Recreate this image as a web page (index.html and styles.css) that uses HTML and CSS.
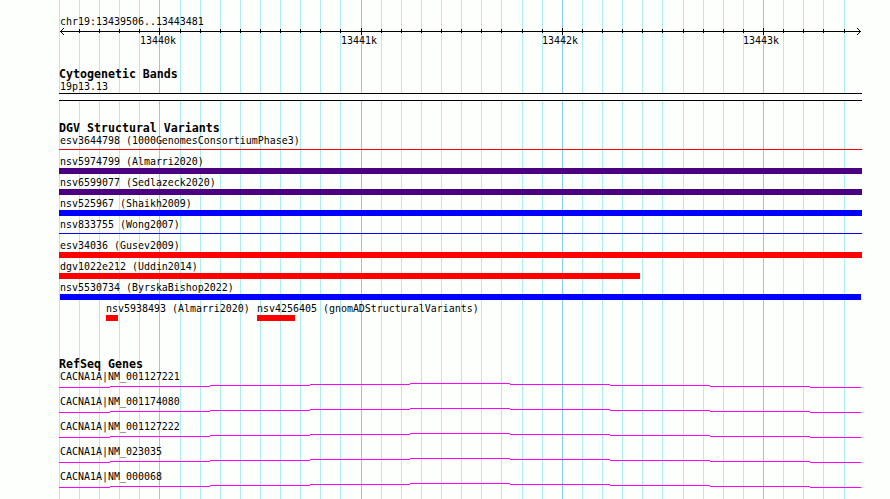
FILE: index.html
```html
<!DOCTYPE html>
<html lang="en">
<head>
  <meta charset="UTF-8">
  <title>chr19:13439506..13443481</title>
  <link rel="stylesheet" href="styles.css">
</head>
<body>
  <div class="browser">
    <svg class="grid" width="890" height="499" shape-rendering="crispEdges">
      <path class="minor" d="M59.5 0v499M79.5 0v499M99.5 0v499M119.5 0v499M139.5 0v499M180.5 0v499M200.5 0v499M220.5 0v499M240.5 0v499M260.5 0v499M280.5 0v499M300.5 0v499M320.5 0v499M340.5 0v499M381.5 0v499M401.5 0v499M421.5 0v499M441.5 0v499M461.5 0v499M481.5 0v499M501.5 0v499M522.5 0v499M542.5 0v499M582.5 0v499M602.5 0v499M622.5 0v499M642.5 0v499M662.5 0v499M683.5 0v499M703.5 0v499M723.5 0v499M743.5 0v499M783.5 0v499M803.5 0v499M823.5 0v499M844.5 0v499"/>
      <path class="major" d="M159.5 0v499M361.5 0v499M562.5 0v499M763.5 0v499"/>
    </svg>

    <div class="tracks">
      <section class="scale">
        <div class="label">chr19:13439506..13443481</div>
        <svg class="axis" width="803" height="9" shape-rendering="crispEdges">
          <path d="M1 4.5h801"/>
          <path d="M20.5 2v4M40.5 2v4M60.5 2v4M80.5 2v4M121.5 2v4M141.5 2v4M161.5 2v4M181.5 2v4M201.5 2v4M221.5 2v4M241.5 2v4M261.5 2v4M281.5 2v4M322.5 2v4M342.5 2v4M362.5 2v4M382.5 2v4M402.5 2v4M422.5 2v4M442.5 2v4M463.5 2v4M483.5 2v4M523.5 2v4M543.5 2v4M563.5 2v4M583.5 2v4M603.5 2v4M624.5 2v4M644.5 2v4M664.5 2v4M684.5 2v4M724.5 2v4M744.5 2v4M764.5 2v4M785.5 2v4"/>
          <path d="M100.5 1v7M302.5 1v7M503.5 1v7M704.5 1v7"/>
          <!-- arrow heads -->
          <path d="M2 3.5h1M3 2.5h1M4 1.5h1M2 5.5h1M3 6.5h1M4 7.5h1"/>
          <path d="M800 3.5h1M799 2.5h1M798 1.5h1M800 5.5h1M799 6.5h1M798 7.5h1"/>
        </svg>
        <div class="ticks">
          <span>13440k</span>
          <span>13441k</span>
          <span>13442k</span>
          <span>13443k</span>
        </div>
      </section>

      <section class="bands">
        <h2>Cytogenetic Bands</h2>
        <div class="label">19p13.13</div>
        <div class="band"></div>
      </section>

      <section class="variants">
        <h2>DGV Structural Variants</h2>
        <div class="row"><div class="label">esv3644798 (1000GenomesConsortiumPhase3)</div><div class="bar thin red"></div></div>
        <div class="row"><div class="label">nsv5974799 (Almarri2020)</div><div class="bar purple"></div></div>
        <div class="row"><div class="label">nsv6599077 (Sedlazeck2020)</div><div class="bar purple"></div></div>
        <div class="row"><div class="label">nsv525967 (Shaikh2009)</div><div class="bar blue"></div></div>
        <div class="row"><div class="label">nsv833755 (Wong2007)</div><div class="bar thin blue"></div></div>
        <div class="row"><div class="label">esv34036 (Gusev2009)</div><div class="bar red"></div></div>
        <div class="row"><div class="label">dgv1022e212 (Uddin2014)</div><div class="bar red" style="width: 581px"></div></div>
        <div class="row"><div class="label">nsv5530734 (ByrskaBishop2022)</div><div class="bar blue inset"></div></div>
        <div class="row pair">
          <div class="item"><div class="label">nsv5938493 (Almarri2020)</div><div class="bar red" style="width: 12px"></div></div>
          <div class="item"><div class="label">nsv4256405 (gnomADStructuralVariants)</div><div class="bar red" style="width: 38px"></div></div>
        </div>
      </section>

      <section class="genes">
        <h2>RefSeq Genes</h2>
        <svg class="defs" width="0" height="0">
          <path id="intron" d="M0 4.5h51M51 3.5h100M151 2.5h100M251 1.5h100M351 .5h100M451 1.5h100M551 2.5h100M651 3.5h100M751 4.5h51"/>
        </svg>
        <div class="gene"><div class="label">CACNA1A|NM_001127221</div><svg class="hat" width="803" height="5"><use href="#intron"/></svg></div>
        <div class="gene"><div class="label">CACNA1A|NM_001174080</div><svg class="hat" width="803" height="5"><use href="#intron"/></svg></div>
        <div class="gene"><div class="label">CACNA1A|NM_001127222</div><svg class="hat" width="803" height="5"><use href="#intron"/></svg></div>
        <div class="gene"><div class="label">CACNA1A|NM_023035</div><svg class="hat" width="803" height="5"><use href="#intron"/></svg></div>
        <div class="gene"><div class="label">CACNA1A|NM_000068</div><svg class="hat" width="803" height="5"><use href="#intron"/></svg></div>
      </section>
    </div>
  </div>
</body>
</html>
```
FILE: styles.css
```css
body {
  margin: 0;
  background: #fdfffc;
  color: #000;
  font-family: "DejaVu Sans Mono", monospace;
  font-size: 9.966px;
  line-height: 12px;
}

.browser {
  position: relative;
  width: 890px;
  height: 499px;
  overflow: hidden;
}

.grid {
  position: absolute;
  top: 0;
  left: 0;
}

.minor {
  stroke: #afeeee;
}

.major {
  stroke: #87ceeb;
}

.tracks {
  position: relative;
  width: 803px;
  padding: 16px 0 0 59px;
}

svg {
  display: block;
}

h2 {
  margin: 0;
  height: 13px;
  font-size: 11.628px;
  line-height: 12px;
  white-space: nowrap;
}

.label {
  height: 12px;
  padding-left: 1px;
  white-space: nowrap;
}

/* coordinate scale */
.scale {
  height: 52px;
}

.axis {
  margin-top: -1px;
  stroke: #000;
}

.ticks {
  display: flex;
  gap: 165px;
  padding-left: 81px;
  margin-top: -1px;
}

.ticks span {
  width: 36px;
}

/* cytogenetic bands */
.bands {
  height: 54px;
}

.band {
  height: 6px;
  border-top: 1px solid #000;
  border-bottom: 1px solid #000;
  background: #fff;
}

/* structural variants */
.variants {
  height: 236px;
}

.row {
  height: 21px;
}

.bar {
  height: 6px;
}

.thin {
  height: 1px;
  margin-top: 2px;
}

.inset {
  margin: 0 1px;
}

.red {
  background: #f00;
}

.blue {
  background: #00f;
}

.purple {
  background: #4b0082;
}

.pair {
  display: flex;
  padding-left: 47px;
}

.item {
  width: 151px;
}

.item .label {
  padding-left: 0;
}

/* genes */
.gene {
  height: 25px;
}

.hat {
  stroke: #f0f;
  shape-rendering: crispEdges;
}

.defs {
  position: absolute;
}
```
